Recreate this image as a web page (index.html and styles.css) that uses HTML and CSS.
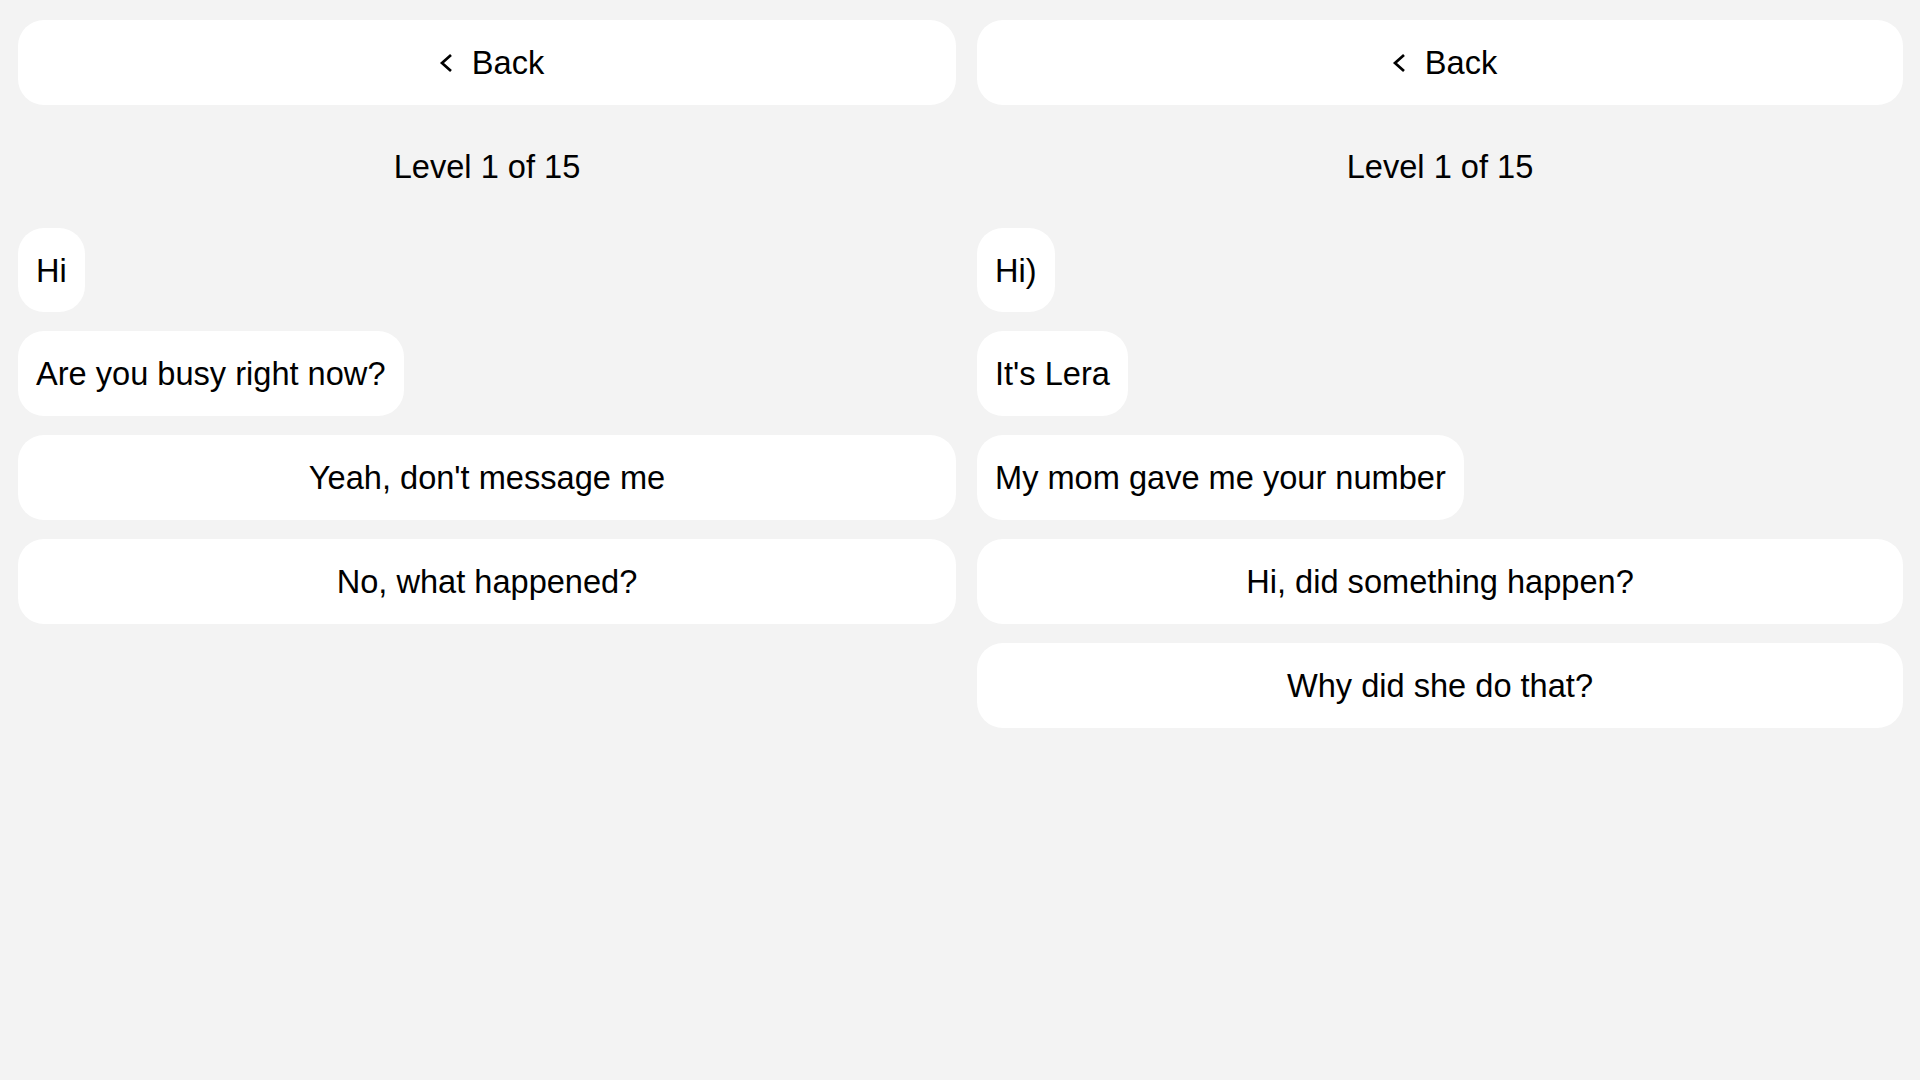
FILE: index.html
```html
<!DOCTYPE html>
<html lang="en">

<head>
  <meta charset="UTF-8">
  <meta name="viewport" content="width=device-width, initial-scale=1.0">
  <title>Chat Levels</title>
  <link rel="stylesheet" href="styles.css">
</head>

<body>
  <main class="screens">

    <!-- Level 1, first dialog -->
    <section class="chat">
      <button class="back-btn">
        <svg width="23" height="20" viewBox="0 0 23 20" fill="none" stroke="#000" stroke-width="2.7">
          <polyline points="21 2 12 10 21 18"></polyline>
        </svg>
        <span>Back</span>
      </button>
      <div class="level">Level 1 of 15</div>
      <div class="msg">Hi</div>
      <div class="msg">Are you busy right now?</div>
      <button class="answer">Yeah, don't message me</button>
      <button class="answer">No, what happened?</button>
    </section>

    <!-- Level 1, second dialog -->
    <section class="chat">
      <button class="back-btn">
        <svg width="23" height="20" viewBox="0 0 23 20" fill="none" stroke="#000" stroke-width="2.7">
          <polyline points="21 2 12 10 21 18"></polyline>
        </svg>
        <span>Back</span>
      </button>
      <div class="level">Level 1 of 15</div>
      <div class="msg">Hi)</div>
      <div class="msg">It's Lera</div>
      <div class="msg">My mom gave me your number</div>
      <button class="answer">Hi, did something happen?</button>
      <button class="answer">Why did she do that?</button>
    </section>

  </main>
</body>

</html>
```

FILE: styles.css
```css
* {
  margin: 0;
  padding: 0;
  box-sizing: border-box;
  font-family: "Liberation Sans", Arial, sans-serif;
}

body {
  background-color: #f3f3f3;
  color: #000;
  padding: 20px 17px 0 18px;
}

/* Two dialogs side by side */
.screens {
  display: grid;
  grid-template-columns: 938px 926px;
  gap: 21px;
  align-items: start;
}

.chat {
  display: flex;
  flex-direction: column;
  align-items: flex-start;
  gap: 19px;
}

/* Shared pill look */
.back-btn,
.msg,
.answer {
  background: #fff;
  border: none;
  border-radius: 26px;
  font-size: 32.6px;
  line-height: 36.8px;
  padding: 25px 18px 23px;
  color: #000;
}

.back-btn {
  width: 100%;
  display: flex;
  justify-content: center;
  align-items: center;
  gap: 19px;
  cursor: pointer;
}

.back-btn svg {
  display: block;
}

.level {
  width: 100%;
  text-align: center;
  font-size: 32.6px;
  line-height: 36.8px;
  padding: 25px 0 23px;
}

.msg {
  white-space: nowrap;
}

.answer {
  width: 100%;
  text-align: center;
  cursor: pointer;
}
```
